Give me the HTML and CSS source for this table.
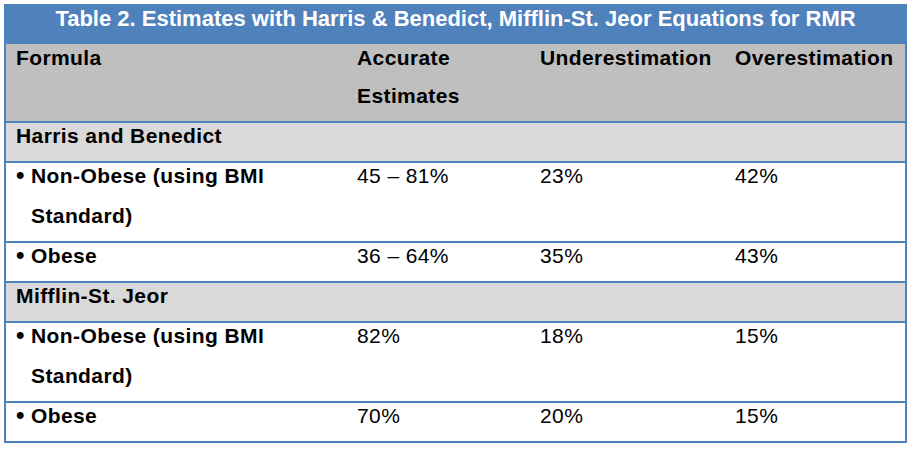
FILE: index.html
```html
<!DOCTYPE html>
<html lang="en">
<head>
<meta charset="utf-8">
<title>Table 2</title>
<link rel="stylesheet" href="styles.css">
</head>
<body>
<div class="page">
  <table class="rmr">
    <colgroup>
      <col class="c1"><col class="c2"><col class="c3"><col class="c4">
    </colgroup>
    <tr class="title-row">
      <td colspan="4"><div class="title">Table 2. Estimates with Harris &amp; Benedict, Mifflin-St. Jeor Equations for RMR</div></td>
    </tr>
    <tr class="head-row">
      <td><div class="txt">Formula</div></td>
      <td><div class="txt">Accurate Estimates</div></td>
      <td><div class="txt">Underestimation</div></td>
      <td><div class="txt">Overestimation</div></td>
    </tr>
    <tr class="section-row">
      <td colspan="4"><div class="txt">Harris and Benedict</div></td>
    </tr>
    <tr class="data-row">
      <td><div class="txt item"><span class="bullet">•</span><span>Non-Obese (using BMI Standard)</span></div></td>
      <td><div class="txt num">45 – 81%</div></td>
      <td><div class="txt num">23%</div></td>
      <td><div class="txt num">42%</div></td>
    </tr>
    <tr class="data-row">
      <td><div class="txt item"><span class="bullet">•</span><span>Obese</span></div></td>
      <td><div class="txt num">36 – 64%</div></td>
      <td><div class="txt num">35%</div></td>
      <td><div class="txt num">43%</div></td>
    </tr>
    <tr class="section-row">
      <td colspan="4"><div class="txt">Mifflin-St. Jeor</div></td>
    </tr>
    <tr class="data-row">
      <td><div class="txt item"><span class="bullet">•</span><span>Non-Obese (using BMI Standard)</span></div></td>
      <td><div class="txt num">82%</div></td>
      <td><div class="txt num">18%</div></td>
      <td><div class="txt num">15%</div></td>
    </tr>
    <tr class="data-row">
      <td><div class="txt item"><span class="bullet">•</span><span>Obese</span></div></td>
      <td><div class="txt num">70%</div></td>
      <td><div class="txt num">20%</div></td>
      <td><div class="txt num">15%</div></td>
    </tr>
  </table>
</div>
</body>
</html>
```

FILE: styles.css
```css
html, body {
  margin: 0;
  padding: 0;
  background: #ffffff;
}

.page {
  padding: 4px;
  font-family: "Liberation Sans", Arial, sans-serif;
  color: #000000;
}

.rmr {
  width: 903px;
  border-collapse: separate;
  border-spacing: 0;
  table-layout: fixed;
  border: 2px solid #4f81bd;
}

.c1 { width: 341px; }
.c2 { width: 183px; }
.c3 { width: 195px; }
.c4 { width: 180px; }

.rmr td {
  padding: 0 0 5px 10px;
  vertical-align: top;
  border-top: 2px solid #4f81bd;
}

.title-row td {
  border-top: none;
  background: #4f81bd;
  padding: 0 0 13px 0;
  text-align: center;
}

.title {
  color: #ffffff;
  font-weight: bold;
  font-size: 22px;
  line-height: 25px;
}

.head-row td {
  border-top: none;
  background: #bfbfbf;
  padding-bottom: 6px;
}

.head-row .txt {
  margin-top: -5px;
  line-height: 38px;
}

.section-row td {
  background: #d9d9d9;
}

.txt {
  font-size: 21px;
  line-height: 40px;
  letter-spacing: 0.4px;
  font-weight: bold;
  margin-top: -7px;
}

.txt.num {
  font-weight: normal;
}

.item {
  display: flex;
}

.bullet {
  flex: 0 0 15px;
  letter-spacing: 0;
  font-size: 24px;
  line-height: 38px;
}
```
